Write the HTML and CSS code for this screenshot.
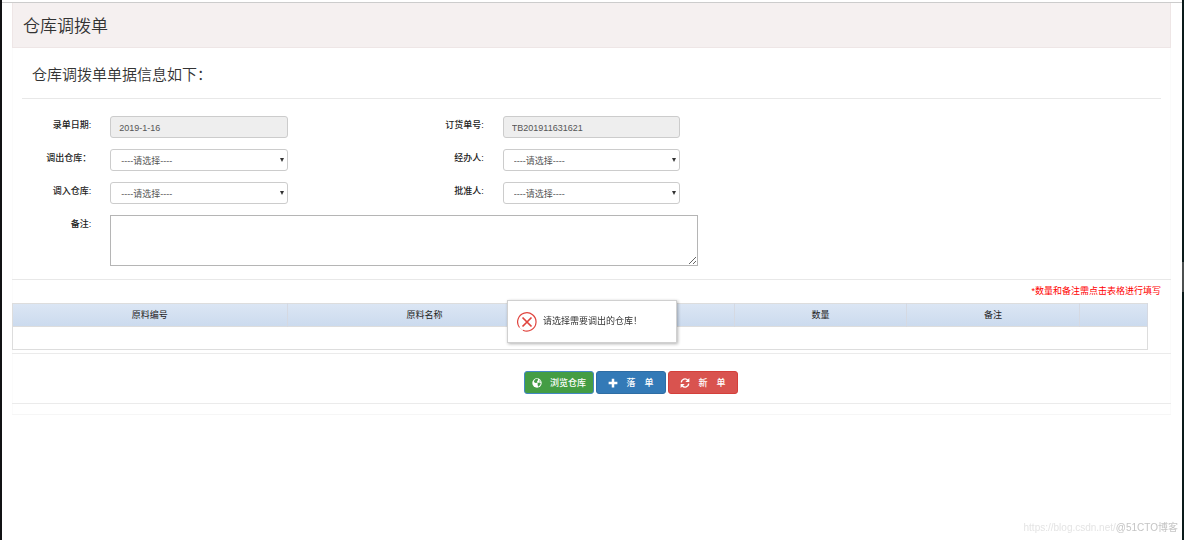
FILE: index.html
```html
<!DOCTYPE html>
<html lang="zh-CN">
<head>
<meta charset="utf-8">
<title>仓库调拨单</title>
<link rel="stylesheet" href="styles.css">
</head>
<body>
<main class="panel">
  <h1 class="panel-title">仓库调拨单</h1>
  <form>
    <h2 class="legend">仓库调拨单单据信息如下：</h2>
    <div class="fields">
      <label for="date">录单日期:</label>
      <input class="control" id="date" type="text" value="2019-1-16" readonly>
      <label class="second" for="order">订货单号:</label>
      <input class="control" id="order" type="text" value="TB201911631621" readonly>

      <label class="first" for="from">调出仓库：</label>
      <div class="picker"><select class="control" id="from"><option>----请选择----</option></select></div>
      <label class="second" for="agent">经办人:</label>
      <div class="picker"><select class="control" id="agent"><option>----请选择----</option></select></div>

      <label class="first" for="to">调入仓库:</label>
      <div class="picker"><select class="control" id="to"><option>----请选择----</option></select></div>
      <label class="second" for="approver">批准人:</label>
      <div class="picker"><select class="control" id="approver"><option>----请选择----</option></select></div>

      <label class="first" for="remark">备注:</label>
      <div class="remark"><textarea id="remark"></textarea></div>
    </div>

    <section class="items">
      <p class="hint">*数量和备注需点击表格进行填写</p>
      <table>
        <colgroup><col class="wide"><col class="wide"><col class="mid"><col class="mid"><col class="mid"><col></colgroup>
        <thead><tr><th>原料编号</th><th>原料名称</th><th></th><th>数量</th><th>备注</th><th></th></tr></thead>
        <tbody><tr><td colspan="6"></td></tr></tbody>
      </table>
    </section>

    <div class="actions">
      <button class="btn green" type="button">
        <svg viewBox="0 0 16 16"><circle cx="8" cy="8" r="7.5" fill="#fff"/><path d="M5 2l4-1 1 2-2 2 1 2-3 1-2-1-1-2zM9 8l3-1 2 1-1 3-3 3-1-3zM12 3l2 2-2 1z" fill="#449d44"/></svg>
        <span>浏览仓库</span>
      </button>
      <button class="btn blue" type="button">
        <svg viewBox="0 0 16 16"><path d="M6 1h4v5h5v4h-5v5H6v-5H1V6h5z" fill="#fff"/></svg>
        <span>落&emsp;单</span>
      </button>
      <button class="btn red" type="button">
        <svg viewBox="0 0 16 16"><path d="M2 7a6 6 0 0 1 10.500-3.500M14 9a6 6 0 0 1-10.500 3.500" fill="none" stroke="#fff" stroke-width="2.200"/><path d="M15 0v6.500H8.500zM1 16V9.500h6.500z" fill="#fff"/></svg>
        <span>新&emsp;单</span>
      </button>
    </div>
  </form>
</main>

<div class="message" role="alert">
  <svg viewBox="0 0 20 20" fill="none" stroke="#e0443e"><path d="M2.500 15.500A9.200 9.200 0 1 1 6 18.300" stroke-width="1.200"/><path d="M6 18.300A9.200 9.200 0 0 1 2.500 15.500" stroke-width="1" stroke-opacity=".2"/><path d="M5.500 5.500l9 9M14.500 5.500l-9 9" stroke-width="1.700"/></svg>
  <span>请选择需要调出的仓库！</span>
</div>
<div class="scroll-mark"></div>
<div class="watermark"><span>https://blog.csdn.net/</span><b>@51CTO博客</b></div>
</body>
</html>
```
FILE: styles.css
```css
* { box-sizing: border-box; }

body {
  margin: 0;
  min-height: 100vh;
  padding: 0 11px 0 10px;
  border: solid #111214;
  border-width: 0 2px;
  border-right-color: #0a1a1a;
  box-shadow: inset 0 2px #fff, inset 0 3px #ccc;
  background: #fff;
  color: #333;
  font: 9px/13px "Liberation Sans", "Noto Sans CJK SC", sans-serif;
}

.panel {
  border: solid #f6f6f6;
  border-width: 3px 0 1px;
  border-top-color: transparent;
  box-shadow: inset 1px 0 #fbfbfb, inset -1px 0 #fbfbfb;
}

.panel-title {
  margin: 0;
  padding: 11px 10px 8px;
  border: 1px solid #eee6e6;
  border-top: 0;
  background: #f5f0f0;
  font-size: 17px;
  font-weight: 350;
  line-height: 25px;
}

.legend {
  margin: 0 10px 17px;
  padding: 17px 10px 13px;
  border-bottom: 1px solid #e8e8e8;
  font-size: 15px;
  font-weight: 350;
  line-height: 20px;
}

.fields {
  display: grid;
  grid-template-columns: repeat(12, minmax(0, 1fr));
  gap: 11px 19px;
  padding-bottom: 13px;
  border-bottom: 1px solid #e8e8e8;
}

label {
  padding-top: 3px;
  color: #222;
  font-weight: 500;
  text-align: right;
}

.first { grid-column-start: 1; }
.second { grid-column: 4 / span 2; }

.control {
  grid-column: span 2;
  width: 100%;
  height: 22px;
  padding: 1px 8px 0;
  border: 1px solid #ccc;
  border-radius: 3px;
  background: #fff;
  color: #555;
  font: inherit;
}

input.control { background: #eee; }

.picker {
  position: relative;
  grid-column: span 2;
}

select.control {
  display: block;
  appearance: none;
  padding: 2px 10px 0;
}

.picker::after {
  content: "";
  position: absolute;
  top: 9px;
  right: 4px;
  border: solid transparent;
  border-width: 4px 2px 0;
  border-top-color: #333;
  pointer-events: none;
}

.remark { grid-column: span 7; }

textarea {
  display: block;
  width: 88%;
  height: 51px;
  border: 1px solid #b5b5b5;
  font: inherit;
}

.items {
  padding-bottom: 3px;
  border-bottom: 1px solid #ebebeb;
}

.hint {
  margin: 0;
  padding: 5px 10px;
  color: #f00;
  text-align: right;
}

table {
  width: 98%;
  table-layout: fixed;
  border-collapse: collapse;
  border: 1px solid #ddd;
}

.wide { width: 24.2%; }
.mid { width: 15.2%; }

thead { background: linear-gradient(#dbe6f4, #cbdaee); }

th {
  height: 23px;
  padding: 0;
  border-right: 1px solid #d5d9e2;
  color: #222;
  font-weight: 400;
}

td {
  height: 23px;
  padding: 0;
  border-top: 1px solid #ddd;
}

.actions {
  display: flex;
  justify-content: center;
  gap: 2px;
  margin-bottom: 10px;
  padding: 17px 0 9px 79px;
  border-bottom: 1px solid #ebebeb;
}

.btn {
  display: flex;
  align-items: center;
  justify-content: center;
  gap: 8px;
  width: 70px;
  height: 23px;
  padding: 0;
  border: 1px solid;
  border-radius: 3px;
  color: #fff;
  font: inherit;
  font-weight: 500;
}

.btn svg { width: 10px; height: 10px; }
.btn span { padding-top: 2px; }
.green { background: #449d44; border-color: #4387c4; }
.blue { background: #337ab7; border-color: #2e6da4; }
.red { background: #d9534f; border-color: #d43f3a; }

.message {
  position: fixed;
  top: 300px;
  left: 50%;
  transform: translateX(-50%);
  display: flex;
  align-items: center;
  gap: 6px;
  width: 170px;
  height: 43px;
  padding-left: 9px;
  border: 1px solid #d0d0d0;
  background: #fff;
  box-shadow: 1px 1px 3px rgba(0, 0, 0, .3);
}

.message svg { width: 20px; height: 20px; }

.scroll-mark {
  position: fixed;
  top: 262px;
  right: 0;
  width: 2px;
  height: 30px;
  background: #4c5050;
}

.watermark {
  position: fixed;
  right: 6px;
  bottom: 4px;
  color: #e4e4e4;
  font-size: 10px;
  line-height: 16px;
}

.watermark b { color: #c4c4c4; font-weight: 400; }
```
